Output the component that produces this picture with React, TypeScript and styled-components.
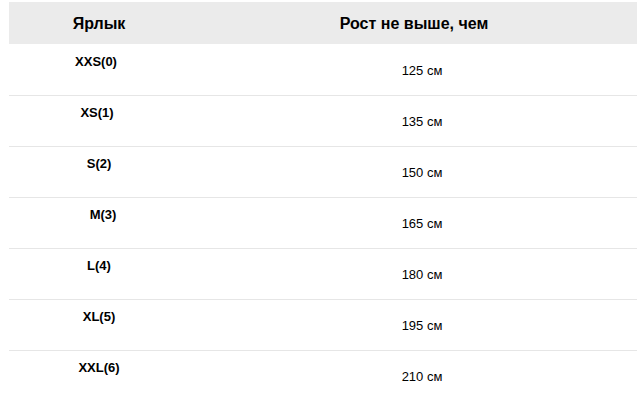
import React from "react";
import styled, { createGlobalStyle } from "styled-components";

const Global = createGlobalStyle`
  html, body {
    margin: 0;
    padding: 0;
    background: #ffffff;
    overflow: hidden;
  }
  body {
    font-family: "Liberation Sans", Arial, sans-serif;
    color: #000;
  }
`;

const Page = styled.div`
  padding: 2px 0 0 9px;
`;

const Table = styled.div`
  width: 630px;
  display: flex;
  flex-direction: column;
`;

const HeadRow = styled.div`
  display: grid;
  grid-template-columns: 180px 1fr;
  height: 42px;
  margin-bottom: 1px;
  background: #ebebeb;
  align-items: center;
`;

const HeadCell = styled.div`
  font-size: 16px;
  font-weight: 700;
  line-height: 18px;
  text-align: center;
  padding-top: 1px;
`;

const Row = styled.div`
  display: grid;
  grid-template-columns: 180px 1fr;
  height: 50px;
  border-bottom: 1px solid #e6e6e6;
  &:last-child {
    border-bottom: none;
  }
`;

const LabelCell = styled.div<{ $shift: number }>`
  font-size: 13px;
  font-weight: 700;
  line-height: 15px;
  text-align: center;
  padding-top: 9px;
  position: relative;
  left: ${(p) => p.$shift}px;
`;

const ValueCell = styled.div`
  font-size: 13px;
  line-height: 15px;
  text-align: center;
  padding-top: 18px;
  padding-left: 16px;
`;

const rows: { label: string; value: string; shift: number }[] = [
  { label: "XXS(0)", value: "125 см", shift: -3 },
  { label: "XS(1)", value: "135 см", shift: -2 },
  { label: "S(2)", value: "150 см", shift: 0 },
  { label: "M(3)", value: "165 см", shift: 4 },
  { label: "L(4)", value: "180 см", shift: 0 },
  { label: "XL(5)", value: "195 см", shift: 0 },
  { label: "XXL(6)", value: "210 см", shift: 0 },
];

export default function App() {
  return (
    <>
      <Global />
      <Page>
        <Table>
          <HeadRow>
            <HeadCell>Ярлык</HeadCell>
            <HeadCell>Рост не выше, чем</HeadCell>
          </HeadRow>
          {rows.map((r) => (
            <Row key={r.label}>
              <LabelCell $shift={r.shift}>{r.label}</LabelCell>
              <ValueCell>{r.value}</ValueCell>
            </Row>
          ))}
        </Table>
      </Page>
    </>
  );
}
